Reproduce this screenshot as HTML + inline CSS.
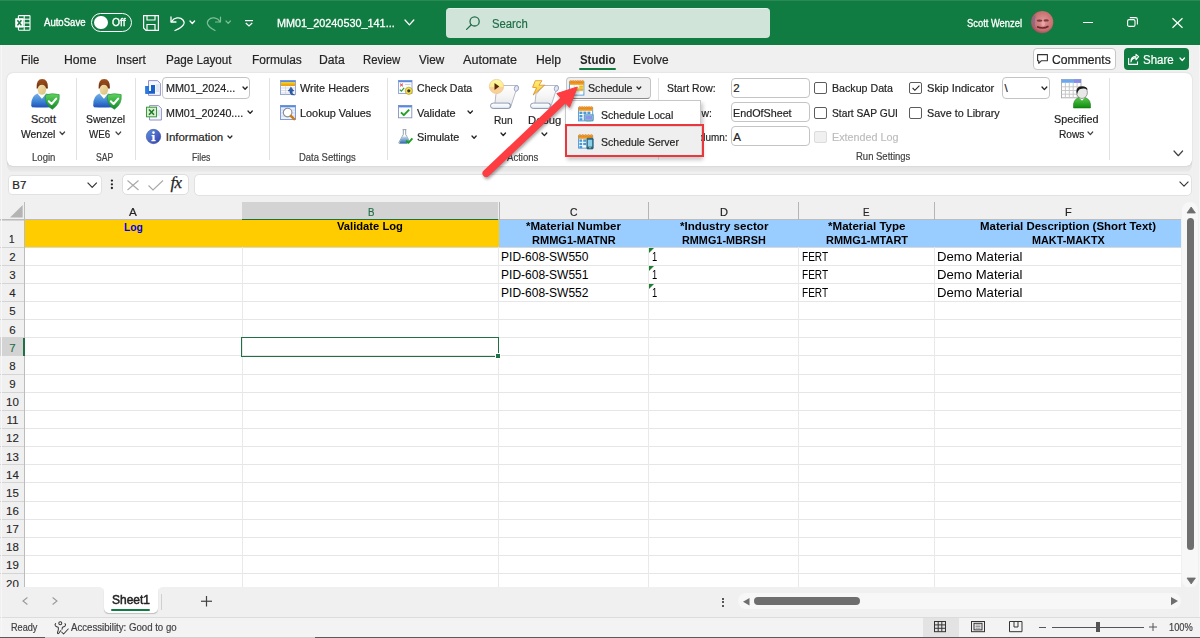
<!DOCTYPE html><html><head><meta charset="utf-8"><style>
html,body{margin:0;padding:0;}
body{width:1200px;height:638px;position:relative;overflow:hidden;background:#f0f0f0;font-family:"Liberation Sans",sans-serif;}
.t{position:absolute;white-space:nowrap;}
svg{display:block}
</style></head><body>
<div style="position:absolute;left:0px;top:0px;width:1200px;height:45px;background:#107c41;"></div>
<div style="position:absolute;left:0px;top:0px;width:1200px;height:1px;background:#2a8a55;"></div>
<svg style="position:absolute;left:15px;top:14.8px;overflow:visible" width="16" height="16" viewBox="0 0 16 16"><g fill="none" stroke="#fff" stroke-width="1.1"><rect x="3.4" y="0.6" width="11.6" height="14.6" rx="0.6"/><line x1="9.2" y1="0.6" x2="9.2" y2="15.2"/><line x1="9.2" y1="4.2" x2="15" y2="4.2"/><line x1="9.2" y1="7.9" x2="15" y2="7.9"/><line x1="9.2" y1="11.6" x2="15" y2="11.6"/><line x1="3.4" y1="4.2" x2="9.2" y2="4.2" /><line x1="3.4" y1="11.6" x2="9.2" y2="11.6"/></g><rect x="0.2" y="3.2" width="8.4" height="9.2" rx="0.6" fill="#fff"/><path d="M2.4 5.2 L6.4 10.4 M6.4 5.2 L2.4 10.4" stroke="#107c41" stroke-width="1.5"/></svg>
<div class="t" style="left:44.30px;top:18.00px;font-size:10px;line-height:10px;color:#fff;transform:scaleX(0.9573);transform-origin:0 0;-webkit-text-stroke:0.35px #fff;">AutoSave</div>
<div style="position:absolute;left:91px;top:13px;width:41px;height:19px;box-sizing:border-box;border:1.2px solid #fff;border-radius:10px;"></div>
<div style="position:absolute;left:94.2px;top:15.7px;width:13.6px;height:13.6px;background:#fff;border-radius:50%;"></div>
<div class="t" style="left:111.80px;top:18.00px;font-size:10px;line-height:10px;color:#fff;transform:scaleX(1.0303);transform-origin:0 0;-webkit-text-stroke:0.35px #fff;">Off</div>
<svg style="position:absolute;left:143px;top:15px;overflow:visible" width="16" height="16" viewBox="0 0 16 16"><g fill="none" stroke="#fff" stroke-width="1.2"><path d="M0.6 0.6 H15.4 V15.4 H3 L0.6 13 Z"/><path d="M4 0.6 V5 H12 V0.6"/><path d="M4 15.4 V9.5 H12 V15.4"/></g></svg>
<svg style="position:absolute;left:170px;top:14.5px;overflow:visible" width="16" height="16" viewBox="0 0 16 16"><g fill="none" stroke="#fff" stroke-width="1.3" stroke-linecap="round" stroke-linejoin="round"><path d="M1 2 V7 H6"/><path d="M1.5 6.6 C4 2.5 10 1.5 13 5 C15.5 8 14 11.5 5 15.5"/></g></svg>
<svg style="position:absolute;left:189.4px;top:20.035000000000004px;overflow:visible" width="6.599999999999994" height="4.529999999999998" viewBox="0 0 6.599999999999994 4.529999999999998"><path d="M1 1 L3.299999999999997 3.529999999999997 L5.599999999999994 1" fill="none" stroke="#fff" stroke-width="1.32" stroke-linecap="round" stroke-linejoin="round"/></svg>
<svg style="position:absolute;left:206px;top:14.5px;overflow:visible" width="16" height="16" viewBox="0 0 16 16"><g fill="none" stroke="#7fbf9a" stroke-width="1.2" stroke-linecap="round" stroke-linejoin="round"><path d="M14.5 2 V7 H9.5"/><path d="M14 6.6 C11.5 2.5 5.5 1.5 2.5 5 C0 8 1.5 11.5 9 15.5"/></g></svg>
<svg style="position:absolute;left:225.20000000000002px;top:20.090000000000007px;overflow:visible" width="6.399999999999977" height="4.4199999999999875" viewBox="0 0 6.399999999999977 4.4199999999999875"><path d="M1 1 L3.1999999999999886 3.4199999999999875 L5.399999999999977 1" fill="none" stroke="#7fbf9a" stroke-width="1.2100000000000002" stroke-linecap="round" stroke-linejoin="round"/></svg>
<svg style="position:absolute;left:245px;top:19.5px;overflow:visible" width="8" height="7" viewBox="0 0 8 7"><g fill="none" stroke="#fff" stroke-width="1.2"><line x1="0" y1="0.6" x2="8" y2="0.6"/><path d="M0.8 3 L4 6 L7.2 3"/></g></svg>
<div class="t" style="left:276.60px;top:18.00px;font-size:11.5px;line-height:11.5px;color:#fff;transform:scaleX(0.9439);transform-origin:0 0;-webkit-text-stroke:0.3px #fff;">MM01_20240530_141...</div>
<svg style="position:absolute;left:404.2px;top:19.279999999999994px;overflow:visible" width="10.800000000000011" height="6.840000000000007" viewBox="0 0 10.800000000000011 6.840000000000007"><path d="M1 1 L5.400000000000006 5.840000000000007 L9.800000000000011 1" fill="none" stroke="#fff" stroke-width="1.32" stroke-linecap="round" stroke-linejoin="round"/></svg>
<div style="position:absolute;left:445.5px;top:7.5px;width:324px;height:30px;box-sizing:border-box;background:#d1e4da;border-radius:4px;border-top:1px solid #e3efe8;"></div>
<svg style="position:absolute;left:465.5px;top:15.5px;overflow:visible" width="14" height="14" viewBox="0 0 14 14"><g fill="none" stroke="#1f6e45" stroke-width="1.3"><circle cx="8.6" cy="5.4" r="4.6"/><line x1="5.3" y1="8.7" x2="0.6" y2="13.4" stroke-linecap="round"/></g></svg>
<div class="t" style="left:492.00px;top:18.00px;font-size:12.5px;line-height:12.5px;color:#1f6e45;transform:scaleX(0.9040);transform-origin:0 0;-webkit-text-stroke:0.2px #1f6e45;">Search</div>
<div class="t" style="left:967.00px;top:19.00px;font-size:10px;line-height:10px;color:#fff;transform:scaleX(0.9362);transform-origin:0 0;-webkit-text-stroke:0.3px #fff;">Scott Wenzel</div>
<svg style="position:absolute;left:1031.3px;top:11.3px;overflow:visible" width="22.3" height="22.3" viewBox="0 0 22.3 22.3"><defs><radialGradient id="av" cx="55%" cy="45%" r="60%"><stop offset="0" stop-color="#e09898"/><stop offset="0.7" stop-color="#c87070"/><stop offset="1" stop-color="#8a4858"/></radialGradient></defs><circle cx="11.15" cy="11.15" r="11.15" fill="url(#av)"/><path d="M1 9 Q2 5 5 4 Q3 10 4.5 17 Q2 15 1 9 Z" fill="#7a6890" opacity="0.7"/><ellipse cx="8.5" cy="9.6" rx="2.8" ry="1.2" fill="#7a3a40"/><ellipse cx="15.2" cy="9.4" rx="2.6" ry="1.2" fill="#7a3a40"/><ellipse cx="12.2" cy="12.8" rx="1.9" ry="2.4" fill="#eaa4a4"/><path d="M6 15.8 Q12 18.5 17.5 15.3" stroke="#6a2a30" stroke-width="1.6" fill="none"/></svg>
<div style="position:absolute;left:1082.6px;top:21.6px;width:10px;height:1.3px;background:#fff;"></div>
<svg style="position:absolute;left:1127px;top:17.4px;overflow:visible" width="11" height="10" viewBox="0 0 11 10"><g fill="none" stroke="#fff" stroke-width="1.1"><rect x="0.6" y="2.6" width="7.4" height="6.8" rx="1.5"/><path d="M2.8 0.6 H8.5 Q10.4 0.6 10.4 2.5 V7.5"/></g></svg>
<svg style="position:absolute;left:1172px;top:17.6px;overflow:visible" width="11" height="10" viewBox="0 0 11 10"><g stroke="#fff" stroke-width="1.2"><line x1="0.5" y1="0.3" x2="10.5" y2="9.7"/><line x1="10.5" y1="0.3" x2="0.5" y2="9.7"/></g></svg>
<div class="t" style="left:20.50px;top:54.00px;font-size:12.3px;line-height:12.3px;color:#242424;transform:scaleX(0.9192);transform-origin:0 0;-webkit-text-stroke:0.2px #242424;">File</div>
<div class="t" style="left:63.50px;top:54.00px;font-size:12.3px;line-height:12.3px;color:#242424;transform:scaleX(0.9909);transform-origin:0 0;-webkit-text-stroke:0.2px #242424;">Home</div>
<div class="t" style="left:115.50px;top:54.00px;font-size:12.3px;line-height:12.3px;color:#242424;transform:scaleX(0.9691);transform-origin:0 0;-webkit-text-stroke:0.2px #242424;">Insert</div>
<div class="t" style="left:165.90px;top:54.00px;font-size:12.3px;line-height:12.3px;color:#242424;transform:scaleX(0.9500);transform-origin:0 0;-webkit-text-stroke:0.2px #242424;">Page Layout</div>
<div class="t" style="left:251.50px;top:54.00px;font-size:12.3px;line-height:12.3px;color:#242424;transform:scaleX(0.9717);transform-origin:0 0;-webkit-text-stroke:0.2px #242424;">Formulas</div>
<div class="t" style="left:319.30px;top:54.00px;font-size:12.3px;line-height:12.3px;color:#242424;transform:scaleX(0.9885);transform-origin:0 0;-webkit-text-stroke:0.2px #242424;">Data</div>
<div class="t" style="left:362.70px;top:54.00px;font-size:12.3px;line-height:12.3px;color:#242424;transform:scaleX(0.9233);transform-origin:0 0;-webkit-text-stroke:0.2px #242424;">Review</div>
<div class="t" style="left:419.00px;top:54.00px;font-size:12.3px;line-height:12.3px;color:#242424;transform:scaleX(0.9547);transform-origin:0 0;-webkit-text-stroke:0.2px #242424;">View</div>
<div class="t" style="left:463.30px;top:54.00px;font-size:12.3px;line-height:12.3px;color:#242424;transform:scaleX(1.0256);transform-origin:0 0;-webkit-text-stroke:0.2px #242424;">Automate</div>
<div class="t" style="left:536.00px;top:54.00px;font-size:12.3px;line-height:12.3px;color:#242424;transform:scaleX(0.9881);transform-origin:0 0;-webkit-text-stroke:0.2px #242424;">Help</div>
<div class="t" style="left:632.70px;top:54.00px;font-size:12.3px;line-height:12.3px;color:#242424;transform:scaleX(0.9648);transform-origin:0 0;-webkit-text-stroke:0.2px #242424;">Evolve</div>
<div class="t" style="left:579.75px;top:54.00px;font-size:12.3px;line-height:12.3px;color:#242424;font-weight:bold;transform:scaleX(0.9281);transform-origin:0 0;">Studio</div>
<div style="position:absolute;left:579.3px;top:68px;width:36.8px;height:2px;background:#107c41;border-radius:1px;"></div>
<div style="position:absolute;left:1032.7px;top:47.5px;width:83.3px;height:22.2px;box-sizing:border-box;background:#fff;border:1px solid #c7c7c7;border-radius:4px;"></div>
<svg style="position:absolute;left:1037px;top:54px;overflow:visible" width="11" height="10" viewBox="0 0 11 10"><path d="M0.6 0.6 H10.4 V6.8 H4.2 L1.8 9.3 V6.8 H0.6 Z" fill="none" stroke="#333" stroke-width="1.1" stroke-linejoin="round"/></svg>
<div class="t" style="left:1052.00px;top:54.00px;font-size:12.3px;line-height:12.3px;color:#242424;transform:scaleX(0.9874);transform-origin:0 0;-webkit-text-stroke:0.2px #242424;">Comments</div>
<div style="position:absolute;left:1124px;top:47.5px;width:64.7px;height:22.5px;background:#107c41;border-radius:4px;"></div>
<svg style="position:absolute;left:1127.6px;top:53.5px;overflow:visible" width="11" height="11" viewBox="0 0 11 11"><g fill="none" stroke="#fff" stroke-width="1.1" stroke-linejoin="round"><path d="M0.6 4 V10.4 H9.5 V7.5"/><path d="M3 8 Q3.5 4 8 3.6 V5.8 L10.6 2.6 L8 0.4 V2.2 Q2.5 2.6 3 8 Z"/></g></svg>
<div class="t" style="left:1143.00px;top:54.00px;font-size:12.3px;line-height:12.3px;color:#fff;transform:scaleX(0.9360);transform-origin:0 0;-webkit-text-stroke:0.2px #fff;">Share</div>
<svg style="position:absolute;left:1179.1000000000001px;top:57.36250000000006px;overflow:visible" width="6.499999999999773" height="4.474999999999875" viewBox="0 0 6.499999999999773 4.474999999999875"><path d="M1 1 L3.2499999999998863 3.4749999999998753 L5.499999999999773 1" fill="none" stroke="#fff" stroke-width="1.32" stroke-linecap="round" stroke-linejoin="round"/></svg>
<div style="position:absolute;left:7px;top:160px;width:1185.3px;height:13px;background:linear-gradient(#d6d6d6,#e2e2e2 40%,#e9e9e9 85%,#f4f4f4);border-radius:0 0 8px 8px;"></div>
<div style="position:absolute;left:7px;top:73px;width:1185.3px;height:93px;background:#fff;border-radius:6px;box-shadow:0 0 1.5px rgba(0,0,0,0.2);"></div>
<div style="position:absolute;left:76px;top:77.8px;width:1px;height:82.5px;background:#e1e1e1;"></div>
<div style="position:absolute;left:134.7px;top:77.8px;width:1px;height:82.5px;background:#e1e1e1;"></div>
<div style="position:absolute;left:268.8px;top:77.8px;width:1px;height:82.5px;background:#e1e1e1;"></div>
<div style="position:absolute;left:386.7px;top:77.8px;width:1px;height:82.5px;background:#e1e1e1;"></div>
<div style="position:absolute;left:658.4px;top:77.8px;width:1px;height:82.5px;background:#e1e1e1;"></div>
<div style="position:absolute;left:1108.5px;top:77.8px;width:1px;height:82.5px;background:#e1e1e1;"></div>
<div class="t" style="left:31.80px;top:152.00px;font-size:10.5px;line-height:10.5px;color:#424242;transform:scaleX(0.9105);transform-origin:0 0;-webkit-text-stroke:0.2px #424242;">Login</div>
<div class="t" style="left:96.40px;top:152.00px;font-size:10.5px;line-height:10.5px;color:#424242;transform:scaleX(0.8190);transform-origin:0 0;-webkit-text-stroke:0.2px #424242;">SAP</div>
<div class="t" style="left:192.40px;top:152.00px;font-size:10.5px;line-height:10.5px;color:#424242;transform:scaleX(0.8262);transform-origin:0 0;-webkit-text-stroke:0.2px #424242;">Files</div>
<div class="t" style="left:299.20px;top:152.00px;font-size:10.5px;line-height:10.5px;color:#424242;transform:scaleX(0.9009);transform-origin:0 0;-webkit-text-stroke:0.2px #424242;">Data Settings</div>
<div class="t" style="left:506.60px;top:152.00px;font-size:10.5px;line-height:10.5px;color:#424242;transform:scaleX(0.9115);transform-origin:0 0;-webkit-text-stroke:0.2px #424242;">Actions</div>
<div class="t" style="left:855.80px;top:151.00px;font-size:10.5px;line-height:10.5px;color:#424242;transform:scaleX(0.9035);transform-origin:0 0;-webkit-text-stroke:0.2px #424242;">Run Settings</div>
<div class="t" style="left:30.90px;top:114.00px;font-size:11px;line-height:11px;color:#242424;-webkit-text-stroke:0.2px #242424;">Scott</div>
<div class="t" style="left:21.20px;top:129.00px;font-size:11px;line-height:11px;color:#242424;transform:scaleX(0.9425);transform-origin:0 0;-webkit-text-stroke:0.2px #242424;">Wenzel</div>
<svg style="position:absolute;left:59.0px;top:131.03500000000003px;overflow:visible" width="6.599999999999994" height="4.529999999999998" viewBox="0 0 6.599999999999994 4.529999999999998"><path d="M1 1 L3.299999999999997 3.529999999999997 L5.599999999999994 1" fill="none" stroke="#424242" stroke-width="1.2100000000000002" stroke-linecap="round" stroke-linejoin="round"/></svg>
<div class="t" style="left:85.90px;top:114.00px;font-size:11px;line-height:11px;color:#242424;transform:scaleX(0.9399);transform-origin:0 0;-webkit-text-stroke:0.2px #242424;">Swenzel</div>
<div class="t" style="left:89.30px;top:129.00px;font-size:11px;line-height:11px;color:#242424;transform:scaleX(0.8889);transform-origin:0 0;-webkit-text-stroke:0.2px #242424;">WE6</div>
<svg style="position:absolute;left:114.60000000000001px;top:131.00750000000002px;overflow:visible" width="6.699999999999989" height="4.584999999999994" viewBox="0 0 6.699999999999989 4.584999999999994"><path d="M1 1 L3.3499999999999943 3.5849999999999937 L5.699999999999989 1" fill="none" stroke="#424242" stroke-width="1.2100000000000002" stroke-linecap="round" stroke-linejoin="round"/></svg>
<div style="position:absolute;left:162.4px;top:76.7px;width:88px;height:22.6px;box-sizing:border-box;border:1px solid #c4c4c4;border-radius:4px;background:#fff;"></div>
<div class="t" style="left:165.70px;top:83.00px;font-size:11.5px;line-height:11.5px;color:#242424;transform:scaleX(0.9429);transform-origin:0 0;-webkit-text-stroke:0.2px #242424;">MM01_2024...</div>
<svg style="position:absolute;left:241.9px;top:85.645px;overflow:visible" width="6.199999999999989" height="4.309999999999993" viewBox="0 0 6.199999999999989 4.309999999999993"><path d="M1 1 L3.0999999999999943 3.309999999999994 L5.199999999999989 1" fill="none" stroke="#242424" stroke-width="1.32" stroke-linecap="round" stroke-linejoin="round"/></svg>
<div class="t" style="left:165.70px;top:108.00px;font-size:11.5px;line-height:11.5px;color:#242424;transform:scaleX(0.9290);transform-origin:0 0;-webkit-text-stroke:0.2px #242424;">MM01_20240....</div>
<svg style="position:absolute;left:246.6px;top:110.3175px;overflow:visible" width="6.300000000000011" height="4.365000000000006" viewBox="0 0 6.300000000000011 4.365000000000006"><path d="M1 1 L3.1500000000000057 3.3650000000000064 L5.300000000000011 1" fill="none" stroke="#242424" stroke-width="1.32" stroke-linecap="round" stroke-linejoin="round"/></svg>
<div class="t" style="left:165.70px;top:132.00px;font-size:11.5px;line-height:11.5px;color:#242424;-webkit-text-stroke:0.2px #242424;">Information</div>
<svg style="position:absolute;left:227.4px;top:134.72750000000002px;overflow:visible" width="5.899999999999977" height="4.144999999999987" viewBox="0 0 5.899999999999977 4.144999999999987"><path d="M1 1 L2.9499999999999886 3.1449999999999876 L4.899999999999977 1" fill="none" stroke="#242424" stroke-width="1.32" stroke-linecap="round" stroke-linejoin="round"/></svg>
<div class="t" style="left:299.50px;top:83.00px;font-size:11.5px;line-height:11.5px;color:#242424;transform:scaleX(0.9454);transform-origin:0 0;-webkit-text-stroke:0.2px #242424;">Write Headers</div>
<div class="t" style="left:299.50px;top:108.00px;font-size:11.5px;line-height:11.5px;color:#242424;transform:scaleX(0.9475);transform-origin:0 0;-webkit-text-stroke:0.2px #242424;">Lookup Values</div>
<div class="t" style="left:416.80px;top:83.00px;font-size:11.5px;line-height:11.5px;color:#242424;transform:scaleX(0.9185);transform-origin:0 0;-webkit-text-stroke:0.2px #242424;">Check Data</div>
<div class="t" style="left:416.80px;top:108.00px;font-size:11.5px;line-height:11.5px;color:#242424;transform:scaleX(0.9509);transform-origin:0 0;-webkit-text-stroke:0.2px #242424;">Validate</div>
<svg style="position:absolute;left:467.0px;top:110.08999999999999px;overflow:visible" width="6.400000000000034" height="4.4200000000000195" viewBox="0 0 6.400000000000034 4.4200000000000195"><path d="M1 1 L3.200000000000017 3.420000000000019 L5.400000000000034 1" fill="none" stroke="#242424" stroke-width="1.32" stroke-linecap="round" stroke-linejoin="round"/></svg>
<div class="t" style="left:416.80px;top:132.00px;font-size:11.5px;line-height:11.5px;color:#242424;transform:scaleX(0.9430);transform-origin:0 0;-webkit-text-stroke:0.2px #242424;">Simulate</div>
<svg style="position:absolute;left:470.59999999999997px;top:134.845px;overflow:visible" width="6.2000000000000455" height="4.310000000000025" viewBox="0 0 6.2000000000000455 4.310000000000025"><path d="M1 1 L3.1000000000000227 3.3100000000000254 L5.2000000000000455 1" fill="none" stroke="#242424" stroke-width="1.32" stroke-linecap="round" stroke-linejoin="round"/></svg>
<div class="t" style="left:494.00px;top:115.00px;font-size:11.5px;line-height:11.5px;color:#242424;transform:scaleX(0.8863);transform-origin:0 0;-webkit-text-stroke:0.2px #242424;">Run</div>
<svg style="position:absolute;left:500.09999999999997px;top:132.0625px;overflow:visible" width="6.500000000000057" height="4.475000000000032" viewBox="0 0 6.500000000000057 4.475000000000032"><path d="M1 1 L3.2500000000000284 3.4750000000000316 L5.500000000000057 1" fill="none" stroke="#242424" stroke-width="1.32" stroke-linecap="round" stroke-linejoin="round"/></svg>
<div class="t" style="left:527.80px;top:115.00px;font-size:11.5px;line-height:11.5px;color:#242424;transform:scaleX(0.9794);transform-origin:0 0;-webkit-text-stroke:0.2px #242424;">Debug</div>
<svg style="position:absolute;left:540.8px;top:131.98px;overflow:visible" width="6.800000000000068" height="4.640000000000038" viewBox="0 0 6.800000000000068 4.640000000000038"><path d="M1 1 L3.400000000000034 3.640000000000038 L5.800000000000068 1" fill="none" stroke="#242424" stroke-width="1.32" stroke-linecap="round" stroke-linejoin="round"/></svg>
<div class="t" style="left:666.50px;top:83.00px;font-size:11.5px;line-height:11.5px;color:#242424;transform:scaleX(0.9069);transform-origin:0 0;-webkit-text-stroke:0.2px #242424;">Start Row:</div>
<div class="t" style="left:666.50px;top:108.00px;font-size:11.5px;line-height:11.5px;color:#242424;transform:scaleX(0.9007);transform-origin:0 0;-webkit-text-stroke:0.2px #242424;">End Row:</div>
<div class="t" style="left:666.50px;top:132.00px;font-size:11.5px;line-height:11.5px;color:#242424;transform:scaleX(0.8606);transform-origin:0 0;-webkit-text-stroke:0.2px #242424;">Start Column:</div>
<div style="position:absolute;left:731.2px;top:77.6px;width:78.6px;height:20.5px;box-sizing:border-box;border:1px solid #c4c4c4;border-radius:4px;background:#fff;"></div>
<div style="position:absolute;left:731.2px;top:102px;width:78.6px;height:20.099999999999994px;box-sizing:border-box;border:1px solid #c4c4c4;border-radius:4px;background:#fff;"></div>
<div style="position:absolute;left:731.2px;top:126.3px;width:78.6px;height:20.10000000000001px;box-sizing:border-box;border:1px solid #c4c4c4;border-radius:4px;background:#fff;"></div>
<div class="t" style="left:733.30px;top:83.00px;font-size:11.5px;line-height:11.5px;color:#242424;-webkit-text-stroke:0.2px #242424;">2</div>
<div class="t" style="left:733.30px;top:108.00px;font-size:11.5px;line-height:11.5px;color:#242424;transform:scaleX(0.9354);transform-origin:0 0;-webkit-text-stroke:0.2px #242424;">EndOfSheet</div>
<div class="t" style="left:733.30px;top:132.00px;font-size:11.5px;line-height:11.5px;color:#242424;-webkit-text-stroke:0.2px #242424;">A</div>
<div style="position:absolute;left:814.2px;top:82.2px;width:12.5px;height:12px;box-sizing:border-box;border:1px solid #5c5c5c;border-radius:2px;background:#fff;"></div>
<div class="t" style="left:832.20px;top:83.00px;font-size:11.5px;line-height:11.5px;color:#242424;transform:scaleX(0.9263);transform-origin:0 0;-webkit-text-stroke:0.2px #242424;">Backup Data</div>
<div style="position:absolute;left:814.2px;top:106.6px;width:12.5px;height:12px;box-sizing:border-box;border:1px solid #5c5c5c;border-radius:2px;background:#fff;"></div>
<div class="t" style="left:832.20px;top:108.00px;font-size:11.5px;line-height:11.5px;color:#242424;transform:scaleX(0.8911);transform-origin:0 0;-webkit-text-stroke:0.2px #242424;">Start SAP GUI</div>
<div style="position:absolute;left:814.2px;top:131px;width:12.5px;height:12px;box-sizing:border-box;border:1px solid #dcdcdc;border-radius:2px;background:#f0f0f0;"></div>
<div class="t" style="left:832.20px;top:132.00px;font-size:11.5px;line-height:11.5px;color:#bdbdbd;transform:scaleX(0.9380);transform-origin:0 0;-webkit-text-stroke:0.2px #bdbdbd;">Extended Log</div>
<div style="position:absolute;left:909px;top:82.2px;width:12.5px;height:12px;box-sizing:border-box;border:1px solid #5c5c5c;border-radius:2px;background:#fff;"></div>
<svg style="position:absolute;left:911.5px;top:85.2px;overflow:visible" width="8" height="6" viewBox="0 0 8 6"><path d="M0.6 3 L2.9 5.3 L7.4 0.6" fill="none" stroke="#242424" stroke-width="1.1"/></svg>
<div class="t" style="left:926.50px;top:83.00px;font-size:11.5px;line-height:11.5px;color:#242424;transform:scaleX(0.9656);transform-origin:0 0;-webkit-text-stroke:0.2px #242424;">Skip Indicator</div>
<div style="position:absolute;left:909px;top:106.6px;width:12.5px;height:12px;box-sizing:border-box;border:1px solid #5c5c5c;border-radius:2px;background:#fff;"></div>
<div class="t" style="left:926.50px;top:108.00px;font-size:11.5px;line-height:11.5px;color:#242424;transform:scaleX(0.9399);transform-origin:0 0;-webkit-text-stroke:0.2px #242424;">Save to Library</div>
<div style="position:absolute;left:1002.3px;top:77.4px;width:47.3px;height:21.4px;box-sizing:border-box;border:1px solid #c4c4c4;border-radius:4px;background:#fff;"></div>
<div class="t" style="left:1004.40px;top:83.00px;font-size:11.5px;line-height:11.5px;color:#242424;-webkit-text-stroke:0.2px #242424;">\</div>
<svg style="position:absolute;left:1041.2px;top:85.68px;overflow:visible" width="6.7999999999999545" height="4.639999999999976" viewBox="0 0 6.7999999999999545 4.639999999999976"><path d="M1 1 L3.3999999999999773 3.6399999999999753 L5.7999999999999545 1" fill="none" stroke="#242424" stroke-width="1.32" stroke-linecap="round" stroke-linejoin="round"/></svg>
<div class="t" style="left:1053.80px;top:114.00px;font-size:11px;line-height:11px;color:#242424;transform:scaleX(0.9834);transform-origin:0 0;-webkit-text-stroke:0.2px #242424;">Specified</div>
<div class="t" style="left:1058.50px;top:129.00px;font-size:11px;line-height:11px;color:#242424;transform:scaleX(0.9236);transform-origin:0 0;-webkit-text-stroke:0.2px #242424;">Rows</div>
<svg style="position:absolute;left:1087.2px;top:131.20750000000004px;overflow:visible" width="6.699999999999818" height="4.5849999999999" viewBox="0 0 6.699999999999818 4.5849999999999"><path d="M1 1 L3.349999999999909 3.5849999999999 L5.699999999999818 1" fill="none" stroke="#424242" stroke-width="1.2100000000000002" stroke-linecap="round" stroke-linejoin="round"/></svg>
<svg style="position:absolute;left:1173.4px;top:149.93500000000003px;overflow:visible" width="10.599999999999909" height="6.729999999999951" viewBox="0 0 10.599999999999909 6.729999999999951"><path d="M1 1 L5.2999999999999545 5.729999999999951 L9.599999999999909 1" fill="none" stroke="#424242" stroke-width="1.2100000000000002" stroke-linecap="round" stroke-linejoin="round"/></svg>
<div style="position:absolute;left:565.9px;top:77.4px;width:84.8px;height:21.4px;box-sizing:border-box;border:1px solid #c4c4c4;border-bottom-color:#8a8a8a;border-radius:4px;background:#efefef;"></div>
<div class="t" style="left:588.20px;top:83.00px;font-size:11.5px;line-height:11.5px;color:#242424;transform:scaleX(0.9281);transform-origin:0 0;-webkit-text-stroke:0.2px #242424;">Schedule</div>
<svg style="position:absolute;left:636.3px;top:85.95499999999998px;overflow:visible" width="5.800000000000068" height="4.090000000000037" viewBox="0 0 5.800000000000068 4.090000000000037"><path d="M1 1 L2.900000000000034 3.0900000000000376 L4.800000000000068 1" fill="none" stroke="#242424" stroke-width="1.32" stroke-linecap="round" stroke-linejoin="round"/></svg>
<div style="position:absolute;left:7.9px;top:174.9px;width:94.1px;height:20.5px;box-sizing:border-box;border:1px solid #e1e1e1;border-radius:4px;background:#fff;"></div>
<div class="t" style="left:12.30px;top:180.00px;font-size:11.5px;line-height:11.5px;color:#242424;-webkit-text-stroke:0.2px #242424;">B7</div>
<svg style="position:absolute;left:87px;top:182px;overflow:visible" width="10.5" height="6.5" viewBox="0 0 10.5 6.5"><path d="M0.6 0.6 L5.2 5.4 L9.8 0.6" fill="none" stroke="#333" stroke-width="1.2" stroke-linejoin="round"/></svg>
<svg style="position:absolute;left:109px;top:178px;overflow:visible" width="6" height="13" viewBox="0 0 6 13"><g fill="#242424"><circle cx="2.9" cy="2.6" r="1.15"/><circle cx="2.9" cy="6.3" r="1.15"/><circle cx="2.9" cy="10" r="1.15"/></g></svg>
<div style="position:absolute;left:122px;top:173.6px;width:67.4px;height:21.8px;box-sizing:border-box;border:1px solid #dedede;border-radius:5px;background:#fff;"></div>
<svg style="position:absolute;left:127.4px;top:179.8px;overflow:visible" width="12" height="10.5" viewBox="0 0 12 10.5"><g stroke="#a8a8a8" stroke-width="1.1"><line x1="0.5" y1="0.5" x2="11.5" y2="10"/><line x1="11.5" y1="0.5" x2="0.5" y2="10"/></g></svg>
<svg style="position:absolute;left:147.9px;top:180px;overflow:visible" width="15.5" height="10.5" viewBox="0 0 15.5 10.5"><path d="M0.5 5.5 L5 10 L15 0.5" fill="none" stroke="#a8a8a8" stroke-width="1.1"/></svg>
<div class="t" style="left:170.5px;top:174px;font:italic 17px/17px 'Liberation Serif',serif;color:#242424;letter-spacing:-0.6px;-webkit-text-stroke:0.25px #242424;">fx</div>
<div style="position:absolute;left:194px;top:173.5px;width:998px;height:22.1px;box-sizing:border-box;border:1px solid #e1e1e1;border-radius:5px;background:#fff;"></div>
<svg style="position:absolute;left:1178.5px;top:180.6px;overflow:visible" width="10" height="6" viewBox="0 0 10 6"><path d="M0.6 0.6 L5 5.2 L9.4 0.6" fill="none" stroke="#333" stroke-width="1.1" stroke-linejoin="round"/></svg>
<div style="position:absolute;left:25px;top:220px;width:1155.6px;height:367px;background:#fff;"></div>
<div style="position:absolute;left:0px;top:202px;width:24.5px;height:385px;background:#f0f0f0;"></div>
<div style="position:absolute;left:24px;top:202px;width:1px;height:385px;background:#bcbcbc;"></div>
<div style="position:absolute;left:0px;top:219px;width:1180.6px;height:1px;background:#bcbcbc;"></div>
<svg style="position:absolute;left:9.9px;top:204.9px;overflow:visible" width="12.7" height="12.5" viewBox="0 0 12.7 12.5"><path d="M12.7 0 V12.5 H0 Z" fill="#b4b4b4"/></svg>
<div style="position:absolute;left:242.3px;top:202px;width:256.2px;height:17px;background:#d3d3d3;"></div>
<div style="position:absolute;left:242.3px;top:218.5px;width:256.2px;height:1.6px;background:#1e7145;"></div>
<div style="position:absolute;left:498.5px;top:202px;width:1px;height:17.5px;background:#b5b5b5;"></div>
<div style="position:absolute;left:648.4px;top:202px;width:1px;height:17.5px;background:#b5b5b5;"></div>
<div style="position:absolute;left:798.4px;top:202px;width:1px;height:17.5px;background:#b5b5b5;"></div>
<div style="position:absolute;left:934.4px;top:202px;width:1px;height:17.5px;background:#b5b5b5;"></div>
<div class="t" style="left:129.40px;top:207.00px;font-size:11.5px;line-height:11.5px;color:#242424;transform:scaleX(1.0196);transform-origin:0 0;-webkit-text-stroke:0.2px #242424;">A</div>
<div class="t" style="left:367.75px;top:207.00px;font-size:11.5px;line-height:11.5px;color:#1e6e4a;transform:scaleX(0.8431);transform-origin:0 0;-webkit-text-stroke:0.2px #1e6e4a;">B</div>
<div class="t" style="left:570.00px;top:207.00px;font-size:11.5px;line-height:11.5px;color:#242424;transform:scaleX(0.9036);transform-origin:0 0;-webkit-text-stroke:0.2px #242424;">C</div>
<div class="t" style="left:719.50px;top:207.00px;font-size:11.5px;line-height:11.5px;color:#242424;transform:scaleX(0.9639);transform-origin:0 0;-webkit-text-stroke:0.2px #242424;">D</div>
<div class="t" style="left:863.00px;top:207.00px;font-size:11.5px;line-height:11.5px;color:#242424;transform:scaleX(0.8497);transform-origin:0 0;-webkit-text-stroke:0.2px #242424;">E</div>
<div class="t" style="left:1065.00px;top:207.00px;font-size:11.5px;line-height:11.5px;color:#242424;transform:scaleX(0.9504);transform-origin:0 0;-webkit-text-stroke:0.2px #242424;">F</div>
<div style="position:absolute;left:25px;top:220px;width:473.5px;height:27px;background:#ffcc00;"></div>
<div style="position:absolute;left:498.5px;top:220px;width:682.1px;height:27px;background:#99ccff;"></div>
<div style="position:absolute;left:25px;top:246.5px;width:1155.6px;height:1px;background:#e6e6e6;"></div>
<div style="position:absolute;left:0px;top:246.5px;width:24px;height:1px;background:#d4d4d4;"></div>
<div style="position:absolute;left:25px;top:264.65px;width:1155.6px;height:1px;background:#e6e6e6;"></div>
<div style="position:absolute;left:0px;top:264.65px;width:24px;height:1px;background:#d4d4d4;"></div>
<div style="position:absolute;left:25px;top:282.8px;width:1155.6px;height:1px;background:#e6e6e6;"></div>
<div style="position:absolute;left:0px;top:282.8px;width:24px;height:1px;background:#d4d4d4;"></div>
<div style="position:absolute;left:25px;top:300.95px;width:1155.6px;height:1px;background:#e6e6e6;"></div>
<div style="position:absolute;left:0px;top:300.95px;width:24px;height:1px;background:#d4d4d4;"></div>
<div style="position:absolute;left:25px;top:319.1px;width:1155.6px;height:1px;background:#e6e6e6;"></div>
<div style="position:absolute;left:0px;top:319.1px;width:24px;height:1px;background:#d4d4d4;"></div>
<div style="position:absolute;left:25px;top:337.25px;width:1155.6px;height:1px;background:#e6e6e6;"></div>
<div style="position:absolute;left:0px;top:337.25px;width:24px;height:1px;background:#d4d4d4;"></div>
<div style="position:absolute;left:25px;top:355.4px;width:1155.6px;height:1px;background:#e6e6e6;"></div>
<div style="position:absolute;left:0px;top:355.4px;width:24px;height:1px;background:#d4d4d4;"></div>
<div style="position:absolute;left:25px;top:373.55px;width:1155.6px;height:1px;background:#e6e6e6;"></div>
<div style="position:absolute;left:0px;top:373.55px;width:24px;height:1px;background:#d4d4d4;"></div>
<div style="position:absolute;left:25px;top:391.7px;width:1155.6px;height:1px;background:#e6e6e6;"></div>
<div style="position:absolute;left:0px;top:391.7px;width:24px;height:1px;background:#d4d4d4;"></div>
<div style="position:absolute;left:25px;top:409.85px;width:1155.6px;height:1px;background:#e6e6e6;"></div>
<div style="position:absolute;left:0px;top:409.85px;width:24px;height:1px;background:#d4d4d4;"></div>
<div style="position:absolute;left:25px;top:428.0px;width:1155.6px;height:1px;background:#e6e6e6;"></div>
<div style="position:absolute;left:0px;top:428.0px;width:24px;height:1px;background:#d4d4d4;"></div>
<div style="position:absolute;left:25px;top:446.15px;width:1155.6px;height:1px;background:#e6e6e6;"></div>
<div style="position:absolute;left:0px;top:446.15px;width:24px;height:1px;background:#d4d4d4;"></div>
<div style="position:absolute;left:25px;top:464.3px;width:1155.6px;height:1px;background:#e6e6e6;"></div>
<div style="position:absolute;left:0px;top:464.3px;width:24px;height:1px;background:#d4d4d4;"></div>
<div style="position:absolute;left:25px;top:482.45px;width:1155.6px;height:1px;background:#e6e6e6;"></div>
<div style="position:absolute;left:0px;top:482.45px;width:24px;height:1px;background:#d4d4d4;"></div>
<div style="position:absolute;left:25px;top:500.6px;width:1155.6px;height:1px;background:#e6e6e6;"></div>
<div style="position:absolute;left:0px;top:500.6px;width:24px;height:1px;background:#d4d4d4;"></div>
<div style="position:absolute;left:25px;top:518.75px;width:1155.6px;height:1px;background:#e6e6e6;"></div>
<div style="position:absolute;left:0px;top:518.75px;width:24px;height:1px;background:#d4d4d4;"></div>
<div style="position:absolute;left:25px;top:536.9px;width:1155.6px;height:1px;background:#e6e6e6;"></div>
<div style="position:absolute;left:0px;top:536.9px;width:24px;height:1px;background:#d4d4d4;"></div>
<div style="position:absolute;left:25px;top:555.05px;width:1155.6px;height:1px;background:#e6e6e6;"></div>
<div style="position:absolute;left:0px;top:555.05px;width:24px;height:1px;background:#d4d4d4;"></div>
<div style="position:absolute;left:25px;top:573.2px;width:1155.6px;height:1px;background:#e6e6e6;"></div>
<div style="position:absolute;left:0px;top:573.2px;width:24px;height:1px;background:#d4d4d4;"></div>
<div style="position:absolute;left:25px;top:246.5px;width:1155.6px;height:1px;background:#d9d9d9;"></div>
<div style="position:absolute;left:241.8px;top:247px;width:1px;height:340px;background:#e9e9e9;"></div>
<div style="position:absolute;left:498.0px;top:247px;width:1px;height:340px;background:#e9e9e9;"></div>
<div style="position:absolute;left:647.9px;top:247px;width:1px;height:340px;background:#e9e9e9;"></div>
<div style="position:absolute;left:797.9px;top:247px;width:1px;height:340px;background:#e9e9e9;"></div>
<div style="position:absolute;left:933.9px;top:247px;width:1px;height:340px;background:#e9e9e9;"></div>
<div style="position:absolute;left:0px;top:219.5px;width:24px;height:1px;background:#d4d4d4;"></div>
<div class="t" style="left:9.40px;top:234.00px;font-size:11.5px;line-height:11.5px;color:#242424;transform:scaleX(0.8750);transform-origin:0 0;-webkit-text-stroke:0.2px #242424;">1</div>
<div class="t" style="left:9.20px;top:252.00px;font-size:11.5px;line-height:11.5px;color:#242424;-webkit-text-stroke:0.1px #242424;">2</div>
<div class="t" style="left:9.20px;top:270.00px;font-size:11.5px;line-height:11.5px;color:#242424;-webkit-text-stroke:0.1px #242424;">3</div>
<div class="t" style="left:9.20px;top:288.00px;font-size:11.5px;line-height:11.5px;color:#242424;-webkit-text-stroke:0.1px #242424;">4</div>
<div class="t" style="left:9.20px;top:306.00px;font-size:11.5px;line-height:11.5px;color:#242424;-webkit-text-stroke:0.1px #242424;">5</div>
<div class="t" style="left:9.20px;top:325.00px;font-size:11.5px;line-height:11.5px;color:#242424;-webkit-text-stroke:0.1px #242424;">6</div>
<div class="t" style="left:9.20px;top:343.00px;font-size:11.5px;line-height:11.5px;color:#1e6e4a;-webkit-text-stroke:0.1px #1e6e4a;">7</div>
<div class="t" style="left:9.20px;top:361.00px;font-size:11.5px;line-height:11.5px;color:#242424;-webkit-text-stroke:0.1px #242424;">8</div>
<div class="t" style="left:9.20px;top:379.00px;font-size:11.5px;line-height:11.5px;color:#242424;-webkit-text-stroke:0.1px #242424;">9</div>
<div class="t" style="left:6.00px;top:397.00px;font-size:11.5px;line-height:11.5px;color:#242424;-webkit-text-stroke:0.1px #242424;">10</div>
<div class="t" style="left:6.43px;top:415.00px;font-size:11.5px;line-height:11.5px;color:#242424;-webkit-text-stroke:0.1px #242424;">11</div>
<div class="t" style="left:6.00px;top:433.00px;font-size:11.5px;line-height:11.5px;color:#242424;-webkit-text-stroke:0.1px #242424;">12</div>
<div class="t" style="left:6.00px;top:452.00px;font-size:11.5px;line-height:11.5px;color:#242424;-webkit-text-stroke:0.1px #242424;">13</div>
<div class="t" style="left:6.00px;top:470.00px;font-size:11.5px;line-height:11.5px;color:#242424;-webkit-text-stroke:0.1px #242424;">14</div>
<div class="t" style="left:6.00px;top:488.00px;font-size:11.5px;line-height:11.5px;color:#242424;-webkit-text-stroke:0.1px #242424;">15</div>
<div class="t" style="left:6.00px;top:506.00px;font-size:11.5px;line-height:11.5px;color:#242424;-webkit-text-stroke:0.1px #242424;">16</div>
<div class="t" style="left:6.00px;top:524.00px;font-size:11.5px;line-height:11.5px;color:#242424;-webkit-text-stroke:0.1px #242424;">17</div>
<div class="t" style="left:6.00px;top:542.00px;font-size:11.5px;line-height:11.5px;color:#242424;-webkit-text-stroke:0.1px #242424;">18</div>
<div class="t" style="left:6.00px;top:560.00px;font-size:11.5px;line-height:11.5px;color:#242424;-webkit-text-stroke:0.1px #242424;">19</div>
<div class="t" style="left:6.00px;top:579.00px;font-size:11.5px;line-height:11.5px;color:#242424;-webkit-text-stroke:0.1px #242424;">20</div>
<div style="position:absolute;left:0px;top:338.25px;width:24px;height:17.15px;background:#d3d3d3;"></div>
<div style="position:absolute;left:23px;top:337.75px;width:1.6px;height:18.15px;background:#1e7145;"></div>
<div class="t" style="left:9.20px;top:343.00px;font-size:11.5px;line-height:11.5px;color:#1e6e4a;-webkit-text-stroke:0.1px #1e6e4a;">7</div>
<div class="t" style="left:123.90px;top:223.00px;font-size:10.3px;line-height:10.3px;color:#0000e6;font-weight:bold;">Log</div>
<div class="t" style="left:337.00px;top:222.00px;font-size:10px;line-height:10px;color:#000;font-weight:bold;transform:scaleX(1.1188);transform-origin:0 0;">Validate Log</div>
<div class="t" style="left:526.10px;top:222.00px;font-size:10px;line-height:10px;color:#000;font-weight:bold;transform:scaleX(1.1538);transform-origin:0 0;">*Material Number</div>
<div class="t" style="left:531.70px;top:236.00px;font-size:10px;line-height:10px;color:#000;font-weight:bold;transform:scaleX(1.1028);transform-origin:0 0;">RMMG1-MATNR</div>
<div class="t" style="left:679.50px;top:222.00px;font-size:10px;line-height:10px;color:#000;font-weight:bold;transform:scaleX(1.1622);transform-origin:0 0;">*Industry sector</div>
<div class="t" style="left:681.75px;top:236.00px;font-size:10px;line-height:10px;color:#000;font-weight:bold;transform:scaleX(1.0848);transform-origin:0 0;">RMMG1-MBRSH</div>
<div class="t" style="left:827.50px;top:222.00px;font-size:10px;line-height:10px;color:#000;font-weight:bold;transform:scaleX(1.1559);transform-origin:0 0;">*Material Type</div>
<div class="t" style="left:825.50px;top:236.00px;font-size:10px;line-height:10px;color:#000;font-weight:bold;transform:scaleX(1.0963);transform-origin:0 0;">RMMG1-MTART</div>
<div class="t" style="left:980.00px;top:222.00px;font-size:10px;line-height:10px;color:#000;font-weight:bold;transform:scaleX(1.1447);transform-origin:0 0;">Material Description (Short Text)</div>
<div class="t" style="left:1032.30px;top:236.00px;font-size:10px;line-height:10px;color:#000;font-weight:bold;transform:scaleX(1.0818);transform-origin:0 0;">MAKT-MAKTX</div>
<div class="t" style="left:501.10px;top:251.00px;font-size:12px;line-height:12px;color:#000;">PID-608-SW550</div>
<div class="t" style="left:651.70px;top:251.00px;font-size:12px;line-height:12px;color:#000;transform:scaleX(0.7820);transform-origin:0 0;">1</div>
<svg style="position:absolute;left:648.9px;top:247.5px;overflow:visible" width="5" height="5" viewBox="0 0 5 5"><path d="M0 0 H5 L0 5 Z" fill="#1e7e34"/></svg>
<div class="t" style="left:801.50px;top:251.00px;font-size:12px;line-height:12px;color:#000;transform:scaleX(0.8392);transform-origin:0 0;">FERT</div>
<div class="t" style="left:937.30px;top:251.00px;font-size:12px;line-height:12px;color:#000;transform:scaleX(1.0942);transform-origin:0 0;">Demo Material</div>
<div class="t" style="left:501.10px;top:269.00px;font-size:12px;line-height:12px;color:#000;">PID-608-SW551</div>
<div class="t" style="left:651.70px;top:269.00px;font-size:12px;line-height:12px;color:#000;transform:scaleX(0.7820);transform-origin:0 0;">1</div>
<svg style="position:absolute;left:648.9px;top:265.65px;overflow:visible" width="5" height="5" viewBox="0 0 5 5"><path d="M0 0 H5 L0 5 Z" fill="#1e7e34"/></svg>
<div class="t" style="left:801.50px;top:269.00px;font-size:12px;line-height:12px;color:#000;transform:scaleX(0.8392);transform-origin:0 0;">FERT</div>
<div class="t" style="left:937.30px;top:269.00px;font-size:12px;line-height:12px;color:#000;transform:scaleX(1.0942);transform-origin:0 0;">Demo Material</div>
<div class="t" style="left:501.10px;top:287.00px;font-size:12px;line-height:12px;color:#000;">PID-608-SW552</div>
<div class="t" style="left:651.70px;top:287.00px;font-size:12px;line-height:12px;color:#000;transform:scaleX(0.7820);transform-origin:0 0;">1</div>
<svg style="position:absolute;left:648.9px;top:283.8px;overflow:visible" width="5" height="5" viewBox="0 0 5 5"><path d="M0 0 H5 L0 5 Z" fill="#1e7e34"/></svg>
<div class="t" style="left:801.50px;top:287.00px;font-size:12px;line-height:12px;color:#000;transform:scaleX(0.8392);transform-origin:0 0;">FERT</div>
<div class="t" style="left:937.30px;top:287.00px;font-size:12px;line-height:12px;color:#000;transform:scaleX(1.0942);transform-origin:0 0;">Demo Material</div>
<div style="position:absolute;left:241.3px;top:337.25px;width:258px;height:19.349999999999998px;box-sizing:border-box;border:1.8px solid #1e7145;"></div>
<div style="position:absolute;left:496.1px;top:353.9px;width:4px;height:4px;background:#1e7145;box-shadow:0 0 0 1px #fff;"></div>
<div style="position:absolute;left:1182.4px;top:201.6px;width:15.6px;height:386px;background:#f7f7f7;border-radius:8px;"></div>
<div style="position:absolute;left:1198.5px;top:45px;width:1.5px;height:592px;background:#f7f7f7;"></div>
<svg style="position:absolute;left:1186.5px;top:207px;overflow:visible" width="8.4" height="6" viewBox="0 0 8.4 6"><path d="M4.2 0 L8.4 6 H0 Z" fill="#6e6e6e" stroke="#6e6e6e" stroke-width="0.8" stroke-linejoin="round"/></svg>
<div style="position:absolute;left:1187px;top:218px;width:7.2px;height:331.6px;background:#6e6e6e;border-radius:4px;"></div>
<svg style="position:absolute;left:1186.5px;top:578px;overflow:visible" width="8.4" height="6" viewBox="0 0 8.4 6"><path d="M0 0 H8.4 L4.2 6 Z" fill="#6e6e6e" stroke="#6e6e6e" stroke-width="0.8" stroke-linejoin="round"/></svg>
<div style="position:absolute;left:96px;top:587px;width:70px;height:8px;background:#fff;"></div>
<div style="position:absolute;left:0px;top:587px;width:104px;height:30px;background:#f0f0f0;border-top-right-radius:5px;"></div>
<div style="position:absolute;left:158px;top:587px;width:1040.5px;height:30px;background:#f0f0f0;border-top-left-radius:5px;"></div>
<div style="position:absolute;left:104px;top:595px;width:54px;height:22px;background:#f0f0f0;"></div>
<svg style="position:absolute;left:22px;top:597px;overflow:visible" width="6" height="8" viewBox="0 0 6 8"><path d="M5.4 0.5 L1 4 L5.4 7.5" fill="none" stroke="#9a9a9a" stroke-width="1.1"/></svg>
<svg style="position:absolute;left:52.4px;top:597px;overflow:visible" width="6" height="8" viewBox="0 0 6 8"><path d="M0.6 0.5 L5 4 L0.6 7.5" fill="none" stroke="#9a9a9a" stroke-width="1.1"/></svg>
<div style="position:absolute;left:104px;top:587px;width:54px;height:26px;background:#fff;border-radius:0 0 5px 5px;box-shadow:0 1px 1px -0.5px rgba(0,0,0,0.2);"></div>
<div class="t" style="left:111.60px;top:594.00px;font-size:12.3px;line-height:12.3px;color:#242424;transform:scaleX(0.9744);transform-origin:0 0;-webkit-text-stroke:0.5px #242424;">Sheet1</div>
<div style="position:absolute;left:111.4px;top:608.8px;width:38.6px;height:1.9px;background:#107c41;border-radius:1px;"></div>
<div style="position:absolute;left:161.2px;top:593.6px;width:1px;height:16.4px;background:#cfcfcf;"></div>
<svg style="position:absolute;left:200.6px;top:596px;overflow:visible" width="11" height="10.5" viewBox="0 0 11 10.5"><g stroke="#424242" stroke-width="1.2"><line x1="5.5" y1="0" x2="5.5" y2="10.5"/><line x1="0" y1="5.25" x2="11" y2="5.25"/></g></svg>
<div style="position:absolute;left:722px;top:597.6px;width:2.2px;height:2.2px;background:#242424;border-radius:50%;"></div>
<div style="position:absolute;left:722px;top:601.2px;width:2.2px;height:2.2px;background:#242424;border-radius:50%;"></div>
<div style="position:absolute;left:722px;top:604.8px;width:2.2px;height:2.2px;background:#242424;border-radius:50%;"></div>
<div style="position:absolute;left:738px;top:593.3px;width:443px;height:16px;background:#f7f7f7;border-radius:8px;"></div>
<svg style="position:absolute;left:743px;top:597.5px;overflow:visible" width="6.5" height="7.5" viewBox="0 0 6.5 7.5"><path d="M0 3.75 L6.5 0 V7.5 Z" fill="#6e6e6e"/></svg>
<div style="position:absolute;left:754.2px;top:597.2px;width:105.8px;height:7.5px;background:#6e6e6e;border-radius:4px;"></div>
<svg style="position:absolute;left:1171px;top:597.4px;overflow:visible" width="7" height="8.2" viewBox="0 0 7 8.2"><path d="M7 4.1 L0 0 V8.2 Z" fill="#6e6e6e"/></svg>
<div style="position:absolute;left:0px;top:616.5px;width:1200px;height:1px;background:#dcdcdc;"></div>
<div style="position:absolute;left:0px;top:617.5px;width:1200px;height:20px;background:#f3f3f3;"></div>
<div class="t" style="left:11.00px;top:622.00px;font-size:10.5px;line-height:10.5px;color:#424242;transform:scaleX(0.8699);transform-origin:0 0;-webkit-text-stroke:0.2px #424242;">Ready</div>
<svg style="position:absolute;left:54px;top:620.5px;overflow:visible" width="15" height="14" viewBox="0 0 15 14"><g fill="none" stroke="#3a3a3a" stroke-width="1.05" stroke-linecap="round" stroke-linejoin="round"><circle cx="6.3" cy="2.3" r="1.5"/><path d="M1.6 2.6 Q0.6 3.4 1.4 4.8 Q2.6 6 4.2 6.2 Q4.8 8.4 4 10 Q3.2 11.6 3.6 12.4 Q4.3 13 5 12 Q5.8 10.6 6.8 9.6"/><path d="M11 2.6 Q12 3.4 11.2 4.8 Q10 6 8.4 6.2 Q8.3 7.5 8 8.2"/><path d="M7.6 11 L9.6 13 L14.2 8"/></g></svg>
<div class="t" style="left:71.40px;top:622.00px;font-size:10.5px;line-height:10.5px;color:#424242;transform:scaleX(0.9187);transform-origin:0 0;-webkit-text-stroke:0.2px #424242;">Accessibility: Good to go</div>
<div style="position:absolute;left:922.5px;top:617.5px;width:36.8px;height:20px;background:#e3e3e3;"></div>
<svg style="position:absolute;left:934px;top:621.3px;overflow:visible" width="12" height="11.2" viewBox="0 0 12 11.2"><g fill="none" stroke="#333" stroke-width="1"><rect x="0.5" y="0.5" width="11" height="10.2"/><line x1="4.2" y1="0.5" x2="4.2" y2="10.7"/><line x1="7.8" y1="0.5" x2="7.8" y2="10.7"/><line x1="0.5" y1="3.9" x2="11.5" y2="3.9"/><line x1="0.5" y1="7.3" x2="11.5" y2="7.3"/></g></svg>
<svg style="position:absolute;left:971px;top:621.3px;overflow:visible" width="14" height="11.2" viewBox="0 0 14 11.2"><g fill="none" stroke="#333" stroke-width="1"><rect x="0.5" y="0.5" width="13" height="10.2"/><rect x="3" y="2.3" width="8" height="6.6"/></g><g stroke="#777" stroke-width="0.8"><line x1="4.5" y1="4" x2="9.5" y2="4"/><line x1="4.5" y1="5.6" x2="9.5" y2="5.6"/><line x1="4.5" y1="7.2" x2="9.5" y2="7.2"/></g></svg>
<svg style="position:absolute;left:1009px;top:621.3px;overflow:visible" width="13.5" height="11.2" viewBox="0 0 13.5 11.2"><g fill="none" stroke="#333" stroke-width="1"><path d="M0.5 0.5 H13 V10.7 H0.5 Z"/><path d="M5 0.5 V6 H9 V0.5"/></g></svg>
<div style="position:absolute;left:1038.8px;top:626.5px;width:7.2px;height:1px;background:#555;"></div>
<div style="position:absolute;left:1051.8px;top:626.5px;width:92px;height:1px;background:#555;"></div>
<div style="position:absolute;left:1095.8px;top:622px;width:4.7px;height:10px;background:#555;"></div>
<svg style="position:absolute;left:1149px;top:622.5px;overflow:visible" width="8" height="8" viewBox="0 0 8 8"><g stroke="#555" stroke-width="1"><line x1="4" y1="0" x2="4" y2="8"/><line x1="0" y1="4" x2="8" y2="4"/></g></svg>
<div class="t" style="left:1168.80px;top:622.00px;font-size:10.5px;line-height:10.5px;color:#424242;transform:scaleX(0.8827);transform-origin:0 0;-webkit-text-stroke:0.2px #424242;">100%</div>
<div style="position:absolute;left:0px;top:637px;width:45px;height:1px;background:#5a5a5a;"></div>
<div style="position:absolute;left:45px;top:637px;width:270px;height:1px;background:#d0d0d0;"></div>
<div style="position:absolute;left:315px;top:637px;width:885px;height:1px;background:#5a5a5a;"></div>
<svg width="0" height="0" style="position:absolute"><defs>
<linearGradient id="gBody" x1="0" y1="0" x2="0" y2="1"><stop offset="0" stop-color="#7fb2e6"/><stop offset="0.55" stop-color="#3d86d6"/><stop offset="1" stop-color="#1f4fb8"/></linearGradient>
<linearGradient id="gHair" x1="0" y1="0" x2="0" y2="1"><stop offset="0" stop-color="#a0521e"/><stop offset="1" stop-color="#6a2e10"/></linearGradient>
<linearGradient id="gFace" x1="0" y1="0" x2="1" y2="1"><stop offset="0" stop-color="#f6deb0"/><stop offset="1" stop-color="#d9c27a"/></linearGradient>
<linearGradient id="gShield" x1="0" y1="0" x2="0" y2="1"><stop offset="0" stop-color="#5fd35f"/><stop offset="1" stop-color="#128a2a"/></linearGradient>
<linearGradient id="gGreenP" x1="0" y1="0" x2="0" y2="1"><stop offset="0" stop-color="#57c94a"/><stop offset="1" stop-color="#0f8a12"/></linearGradient>
<linearGradient id="gInfo" x1="0" y1="0" x2="1" y2="1"><stop offset="0" stop-color="#5a95d8"/><stop offset="0.6" stop-color="#4a5fc4"/><stop offset="1" stop-color="#2b3fa0"/></linearGradient>
<linearGradient id="gPlay" x1="0" y1="0" x2="0" y2="1"><stop offset="0" stop-color="#fdf8a0"/><stop offset="0.6" stop-color="#f9e07a"/><stop offset="1" stop-color="#f5b88a"/></linearGradient>
<linearGradient id="gPaper" x1="0" y1="0" x2="0" y2="1"><stop offset="0" stop-color="#ffffff"/><stop offset="0.6" stop-color="#eeeeee"/><stop offset="1" stop-color="#d8ecf8"/></linearGradient>
<linearGradient id="gBolt" x1="0" y1="0" x2="0" y2="1"><stop offset="0" stop-color="#fff27a"/><stop offset="1" stop-color="#f5c02a"/></linearGradient>
<linearGradient id="gFlask" x1="0" y1="0" x2="0" y2="1"><stop offset="0" stop-color="#c8d8ea"/><stop offset="1" stop-color="#2d6fb5"/></linearGradient>
</defs></svg>
<svg style="position:absolute;left:29.6px;top:79px;overflow:visible" width="30" height="31" viewBox="0 0 30 31"><path d="M1.2 26.5 Q0.8 16.5 8 14.2 L11.9 14 L16 14.2 Q20.5 15.5 21 20 L21 28.2 Q11 29 2 28.2 Z" fill="url(#gBody)"/><path d="M7.2 14.3 L11.9 19.8 L16.6 14.3 Z" fill="#fff"/><path d="M6.6 9.4 Q6 0.2 12.2 0.1 Q18.4 0.2 17.9 9.4 Z" fill="url(#gHair)"/><ellipse cx="11.9" cy="10.6" rx="4.3" ry="5.2" fill="url(#gFace)"/><path d="M7.4 7.5 Q8 3.8 12.2 3.9 Q15 4 16.6 6.5 Q14 5.2 12 5.6 Q9 5.6 7.4 7.5 Z" fill="url(#gHair)"/><path d="M15.3 16 Q22 13.6 29.2 15.6 Q30.2 25.5 22.3 30.3 Q14.4 25.5 15.3 16 Z" fill="url(#gShield)" stroke="#1c8a30" stroke-width="0.6"/><path d="M18.8 22.2 L21.6 25 L26.2 19.6" fill="none" stroke="#fff" stroke-width="2" stroke-linecap="round" stroke-linejoin="round"/></svg>
<svg style="position:absolute;left:91.6px;top:79px;overflow:visible" width="30" height="31" viewBox="0 0 30 31"><path d="M1.2 26.5 Q0.8 16.5 8 14.2 L11.9 14 L16 14.2 Q20.5 15.5 21 20 L21 28.2 Q11 29 2 28.2 Z" fill="url(#gBody)"/><path d="M7.2 14.3 L11.9 19.8 L16.6 14.3 Z" fill="#fff"/><path d="M6.6 9.4 Q6 0.2 12.2 0.1 Q18.4 0.2 17.9 9.4 Z" fill="url(#gHair)"/><ellipse cx="11.9" cy="10.6" rx="4.3" ry="5.2" fill="url(#gFace)"/><path d="M7.4 7.5 Q8 3.8 12.2 3.9 Q15 4 16.6 6.5 Q14 5.2 12 5.6 Q9 5.6 7.4 7.5 Z" fill="url(#gHair)"/><path d="M15.3 16 Q22 13.6 29.2 15.6 Q30.2 25.5 22.3 30.3 Q14.4 25.5 15.3 16 Z" fill="url(#gShield)" stroke="#1c8a30" stroke-width="0.6"/><path d="M18.8 22.2 L21.6 25 L26.2 19.6" fill="none" stroke="#fff" stroke-width="2" stroke-linecap="round" stroke-linejoin="round"/></svg>
<svg style="position:absolute;left:144.5px;top:80px;overflow:visible" width="16" height="16" viewBox="0 0 16 16"><path d="M3.5 0.6 H12.5 L15.4 3.5 V15.4 H3.5 Z" fill="#f4f7fb" stroke="#8a84c8" stroke-width="0.9"/><g stroke="#b8c8e0" stroke-width="0.7"><line x1="11" y1="5" x2="14" y2="5"/><line x1="11" y1="7" x2="14" y2="7"/><line x1="11" y1="9" x2="14" y2="9"/><line x1="11" y1="11" x2="14" y2="11"/></g><path d="M0.4 6 H3.8 V11 H6 V5 H10 V13.8 H0.4 Z" fill="#1b5fc8"/><path d="M0.4 6 H3.8 V13.8 H0.4 Z" fill="#2a7ae0"/></svg>
<svg style="position:absolute;left:145.8px;top:104.8px;overflow:visible" width="16" height="16" viewBox="0 0 16 16"><path d="M3.5 0.6 H12.5 L15.4 3.5 V15 H3.5 Z" fill="#f4f7fb" stroke="#8a84c8" stroke-width="0.9"/><g stroke="#b8c8e0" stroke-width="0.7"><line x1="11" y1="6" x2="14" y2="6"/><line x1="11" y1="8" x2="14" y2="8"/><line x1="11" y1="10" x2="14" y2="10"/></g><rect x="0.5" y="2.2" width="10" height="9.6" fill="#d9f0d0" stroke="#3a9a3a" stroke-width="1"/><path d="M3 4.5 L8 9.8 M8 4.5 L3 9.8" stroke="#1f7a2a" stroke-width="1.6"/></svg>
<svg style="position:absolute;left:146.2px;top:129px;overflow:visible" width="15" height="15" viewBox="0 0 15 15"><circle cx="7.5" cy="7.5" r="7.2" fill="url(#gInfo)" stroke="#2a3a90" stroke-width="0.5"/><circle cx="7.5" cy="3.6" r="1.3" fill="#fff"/><path d="M5.6 6 H8.6 V11 H9.6 V12.2 H5.4 V11 H6.4 V7.2 H5.6 Z" fill="#fff"/></svg>
<svg style="position:absolute;left:280.4px;top:80.4px;overflow:visible" width="16" height="15" viewBox="0 0 16 15"><rect x="0.5" y="0.5" width="15" height="14" fill="#f8fafc" stroke="#8aa0d0" stroke-width="0.9"/><rect x="0.5" y="0.5" width="15" height="1.8" fill="#5a8ae0"/><rect x="0.9" y="2.3" width="14.2" height="3.4" fill="#f5c400"/><rect x="0.9" y="4.6" width="14.2" height="1.1" fill="#e88a10"/><g stroke="#c8ccd8" stroke-width="0.6"><line x1="1" y1="8" x2="15" y2="8"/><line x1="1" y1="10.5" x2="15" y2="10.5"/><line x1="1" y1="13" x2="15" y2="13"/><line x1="5.5" y1="5.7" x2="5.5" y2="14.5"/><line x1="10.5" y1="5.7" x2="10.5" y2="14.5"/></g><path d="M8.2 11 L11 7.2 L13.8 11 H12.2 V13 Q12.5 14.4 14.5 15 Q10.6 15.4 10 12.8 V11 Z" fill="#2a5fb0" stroke="#1a3a80" stroke-width="0.5"/></svg>
<svg style="position:absolute;left:280.4px;top:104.8px;overflow:visible" width="16" height="15" viewBox="0 0 16 15"><rect x="0.5" y="0.5" width="15" height="14" fill="#eaf2fc" stroke="#7a90d8" stroke-width="0.9"/><rect x="0.5" y="0.5" width="15" height="1.8" fill="#5a8ae0"/><g stroke="#b8c8e8" stroke-width="0.6"><line x1="1" y1="5" x2="15" y2="5"/><line x1="1" y1="8" x2="15" y2="8"/><line x1="1" y1="11" x2="15" y2="11"/></g><circle cx="7.6" cy="7.6" r="4.3" fill="#fff" stroke="#8a8a8a" stroke-width="1.1"/><path d="M10.8 10.8 L14.2 14.2" stroke="#d07a10" stroke-width="2.4" stroke-linecap="round"/></svg>
<svg style="position:absolute;left:398.2px;top:80.4px;overflow:visible" width="15" height="15" viewBox="0 0 15 15"><rect x="0.5" y="0.5" width="13.5" height="13" fill="#fafcff" stroke="#8aa0d8" stroke-width="0.9"/><rect x="0.5" y="0.5" width="13.5" height="1.7" fill="#5a8ae0"/><path d="M2 3.6 L5 6.4 M5 3.6 L2 6.4" stroke="#e03a3a" stroke-width="1"/><path d="M1.8 9.6 L3.4 11.2 L6.2 7.8" fill="none" stroke="#2aa02a" stroke-width="1.1"/><g stroke="#b0b8c8" stroke-width="0.6"><line x1="7" y1="4.5" x2="12.5" y2="4.5"/></g><circle cx="10.8" cy="10.8" r="3.6" fill="#f2e050" stroke="#b09a20" stroke-width="0.7"/><circle cx="10.8" cy="10.8" r="1.6" fill="#3a3a3a"/></svg>
<svg style="position:absolute;left:398.2px;top:105px;overflow:visible" width="14.5" height="13.5" viewBox="0 0 14.5 13.5"><rect x="0.5" y="0.5" width="13.3" height="12.3" fill="#fafcff" stroke="#8a94b8" stroke-width="0.9"/><rect x="0.5" y="0.5" width="13.3" height="1.9" fill="#5a8ae0"/><path d="M3 7.4 L5.8 10.2 L11.2 4.6" fill="none" stroke="#20a020" stroke-width="1.9" stroke-linejoin="round"/></svg>
<svg style="position:absolute;left:398.2px;top:129px;overflow:visible" width="15" height="15" viewBox="0 0 15 15"><path d="M4.6 0.6 H8.4 M5.3 0.8 V5.5 L0.8 13.6 Q0.6 14.4 1.6 14.4 H9 M7.7 0.8 V5.5 L10.5 10.5" fill="none" stroke="#8a96a8" stroke-width="0.9"/><path d="M4 7.5 H9 L11.2 11.5 L10 14.2 H1.4 Z" fill="url(#gFlask)"/><path d="M8.2 11.6 L10.4 13.8 L14.4 9.4" fill="none" stroke="#18a018" stroke-width="1.8" stroke-linejoin="round"/></svg>
<svg style="position:absolute;left:488px;top:79px;overflow:visible" width="32" height="31" viewBox="0 0 32 31"><defs><linearGradient id="gPap2" x1="0" y1="0" x2="0" y2="1"><stop offset="0" stop-color="#ffffff"/><stop offset="0.45" stop-color="#f6f6f6"/><stop offset="0.7" stop-color="#eeeeee"/><stop offset="0.86" stop-color="#d8effc"/><stop offset="1" stop-color="#eef6fc"/></linearGradient><linearGradient id="gRoll" x1="0" y1="0" x2="0" y2="1"><stop offset="0" stop-color="#ffffff"/><stop offset="0.6" stop-color="#f2f6fa"/><stop offset="1" stop-color="#c8dcf0"/></linearGradient></defs><path d="M15.6 6.5 H28.9 Q30.6 6.8 30.5 9.2 Q30.2 11.8 27.8 12.2 L22.5 28.4 H6.5 L7.9 15.6 Z" fill="url(#gPap2)" stroke="#a6aab6" stroke-width="0.8"/><path d="M26.3 9.4 Q26.6 6.5 28.9 6.5 Q30.6 6.8 30.5 9.2 Q30.2 12.2 27.6 12.4 Q26.2 11.6 26.3 9.4 Z" fill="#dfe8f6" stroke="#8a92b8" stroke-width="0.8"/><rect x="2.5" y="24.1" width="20.2" height="5.4" rx="2.7" fill="url(#gRoll)" stroke="#8c92a6" stroke-width="0.9"/><path d="M21.2 24.3 Q23.2 26.5 21.4 29.4" fill="none" stroke="#8890b8" stroke-width="0.7"/></svg>
<svg style="position:absolute;left:488.6px;top:79.1px;overflow:visible" width="15" height="15" viewBox="0 0 15 15"><defs><linearGradient id="gPlay2" x1="0" y1="0" x2="0" y2="1"><stop offset="0" stop-color="#fdf9a8"/><stop offset="0.5" stop-color="#faf088"/><stop offset="0.52" stop-color="#f9cfa0"/><stop offset="1" stop-color="#f9d090"/></linearGradient></defs><circle cx="7.5" cy="7.5" r="7.1" fill="url(#gPlay2)" stroke="#f0c890" stroke-width="0.8"/><path d="M5.5 4 L10.3 7.5 L5.5 11 Z" fill="#5a2a08"/></svg>
<svg style="position:absolute;left:528px;top:79px;overflow:visible" width="32" height="31" viewBox="0 0 32 31"><defs><linearGradient id="gPap2" x1="0" y1="0" x2="0" y2="1"><stop offset="0" stop-color="#ffffff"/><stop offset="0.45" stop-color="#f6f6f6"/><stop offset="0.7" stop-color="#eeeeee"/><stop offset="0.86" stop-color="#d8effc"/><stop offset="1" stop-color="#eef6fc"/></linearGradient><linearGradient id="gRoll" x1="0" y1="0" x2="0" y2="1"><stop offset="0" stop-color="#ffffff"/><stop offset="0.6" stop-color="#f2f6fa"/><stop offset="1" stop-color="#c8dcf0"/></linearGradient></defs><path d="M15.6 6.5 H28.9 Q30.6 6.8 30.5 9.2 Q30.2 11.8 27.8 12.2 L22.5 28.4 H6.5 L7.9 15.6 Z" fill="url(#gPap2)" stroke="#a6aab6" stroke-width="0.8"/><path d="M26.3 9.4 Q26.6 6.5 28.9 6.5 Q30.6 6.8 30.5 9.2 Q30.2 12.2 27.6 12.4 Q26.2 11.6 26.3 9.4 Z" fill="#dfe8f6" stroke="#8a92b8" stroke-width="0.8"/><rect x="2.5" y="24.1" width="20.2" height="5.4" rx="2.7" fill="url(#gRoll)" stroke="#8c92a6" stroke-width="0.9"/><path d="M21.2 24.3 Q23.2 26.5 21.4 29.4" fill="none" stroke="#8890b8" stroke-width="0.7"/></svg>
<svg style="position:absolute;left:531.5px;top:79.8px;overflow:visible" width="13" height="16" viewBox="0 0 13 16"><path d="M3.3 0.7 L9.9 0.7 L7 5.2 L12.6 5.2 L1.2 15 L4.6 7.8 L0.6 7.3 Z" fill="url(#gBolt)" stroke="#d88a20" stroke-width="0.8" stroke-linejoin="round"/></svg>
<svg style="position:absolute;left:569.2px;top:80.3px;overflow:visible" width="16" height="16" viewBox="0 0 16 16"><rect x="0.5" y="2" width="14.4" height="13.1" fill="#fff" stroke="#4a9ad8" stroke-width="0.9"/><rect x="0.5" y="1.6" width="14.4" height="3.2" fill="#f39a1e"/><circle cx="1.80" cy="1.6" r="1.1" fill="#f5a030" stroke="#d07010" stroke-width="0.4"/><circle cx="4.16" cy="1.6" r="1.1" fill="#f5a030" stroke="#d07010" stroke-width="0.4"/><circle cx="6.52" cy="1.6" r="1.1" fill="#f5a030" stroke="#d07010" stroke-width="0.4"/><circle cx="8.88" cy="1.6" r="1.1" fill="#f5a030" stroke="#d07010" stroke-width="0.4"/><circle cx="11.24" cy="1.6" r="1.1" fill="#f5a030" stroke="#d07010" stroke-width="0.4"/><circle cx="13.60" cy="1.6" r="1.1" fill="#f5a030" stroke="#d07010" stroke-width="0.4"/><g stroke="#c8dff0" stroke-width="0.7"><line x1="1" y1="8" x2="14.5" y2="8"/><line x1="1" y1="11" x2="14.5" y2="11"/><line x1="5.3" y1="5" x2="5.3" y2="15"/><line x1="10" y1="5" x2="10" y2="15"/></g><rect x="10.3" y="5.5" width="4" height="2.3" fill="#f5c000"/><rect x="5.6" y="8.3" width="4.2" height="2.5" fill="#f5c000"/><rect x="10.3" y="8.3" width="4" height="2.5" fill="#f0b020"/></svg>
<svg style="position:absolute;left:1061px;top:79px;overflow:visible" width="31" height="30" viewBox="0 0 31 30"><rect x="0.5" y="0.5" width="19.5" height="18.3" fill="#fff" stroke="#a8a8a8" stroke-width="0.9"/><rect x="0.5" y="0.5" width="19.5" height="3.3" fill="#6aa8f0"/><rect x="13" y="0.5" width="7" height="3.3" fill="#8a8ae8"/><g stroke="#c8c8c8" stroke-width="1"><line x1="0.5" y1="7.8" x2="20" y2="7.8"/><line x1="0.5" y1="11.5" x2="20" y2="11.5"/><line x1="0.5" y1="15.2" x2="20" y2="15.2"/><line x1="4.4" y1="3.8" x2="4.4" y2="18.8"/><line x1="8.3" y1="3.8" x2="8.3" y2="18.8"/><line x1="12.2" y1="3.8" x2="12.2" y2="18.8"/><line x1="16.1" y1="3.8" x2="16.1" y2="18.8"/></g><path d="M12.5 29 Q11.5 20.5 18 18.5 H24 Q30.5 20.5 29.5 29 Z" fill="url(#gGreenP)" stroke="#0a6a0a" stroke-width="0.5"/><path d="M18 18.5 L21 21.8 L24 18.5 Z" fill="#fff"/><ellipse cx="21" cy="13.5" rx="5.4" ry="6" fill="#e8e8e8" stroke="#606060" stroke-width="0.6"/><path d="M15.6 13 Q15 7.2 21 7.5 Q26.5 7.2 26.5 11 Q24 8.8 19.5 10 Q17 10.8 16.2 15 Z" fill="#1a1a1a"/></svg>
<div style="position:absolute;left:565.4px;top:99.5px;width:136.1px;height:57px;box-sizing:border-box;background:#fff;border:1px solid #c8c8c8;box-shadow:2px 3px 4px rgba(0,0,0,0.22);"></div>
<div style="position:absolute;left:566.4px;top:126px;width:134.5px;height:29px;background:#efefef;border-top:1px solid #d8d8d8;"></div>
<div style="position:absolute;left:564.5px;top:124px;width:139.1px;height:32.7px;box-sizing:border-box;border:2.2px solid #e8383d;"></div>
<div class="t" style="left:601.30px;top:110.00px;font-size:11.5px;line-height:11.5px;color:#242424;transform:scaleX(0.9193);transform-origin:0 0;-webkit-text-stroke:0.2px #242424;">Schedule Local</div>
<div class="t" style="left:601.30px;top:137.00px;font-size:11.5px;line-height:11.5px;color:#242424;transform:scaleX(0.9165);transform-origin:0 0;-webkit-text-stroke:0.2px #242424;">Schedule Server</div>
<svg style="position:absolute;left:578.2px;top:105.8px;overflow:visible" width="16" height="16" viewBox="0 0 16 16"><rect x="0.5" y="2" width="14.2" height="12.9" fill="#fff" stroke="#4a9ad8" stroke-width="0.9"/><rect x="0.5" y="1.6" width="14.2" height="3.2" fill="#f39a1e"/><circle cx="1.80" cy="1.6" r="1.1" fill="#f5a030" stroke="#d07010" stroke-width="0.4"/><circle cx="4.12" cy="1.6" r="1.1" fill="#f5a030" stroke="#d07010" stroke-width="0.4"/><circle cx="6.44" cy="1.6" r="1.1" fill="#f5a030" stroke="#d07010" stroke-width="0.4"/><circle cx="8.76" cy="1.6" r="1.1" fill="#f5a030" stroke="#d07010" stroke-width="0.4"/><circle cx="11.08" cy="1.6" r="1.1" fill="#f5a030" stroke="#d07010" stroke-width="0.4"/><circle cx="13.40" cy="1.6" r="1.1" fill="#f5a030" stroke="#d07010" stroke-width="0.4"/><g fill="#4a9ad8"><rect x="1.4" y="5.6" width="3" height="2.4"/><rect x="5.4" y="5.6" width="3" height="2.4"/><rect x="9.4" y="5.6" width="3" height="2.4"/><rect x="1.4" y="9" width="3" height="2.4"/><rect x="1.4" y="12.2" width="3" height="2.4"/></g><rect x="6.2" y="8.8" width="9" height="5.4" fill="#a8b4f4" stroke="#4a9ab0" stroke-width="0.9"/><rect x="7.4" y="9.9" width="6.6" height="3.2" fill="#8a96ec"/><path d="M8.8 14.4 H12.6 L13.4 15.5 H8 Z" fill="#7ab0b0"/></svg>
<svg style="position:absolute;left:578.2px;top:134.2px;overflow:visible" width="16" height="15" viewBox="0 0 16 15"><rect x="0.5" y="2" width="14.2" height="12.1" fill="#fff" stroke="#4a9ad8" stroke-width="0.9"/><rect x="0.5" y="1.6" width="14.2" height="3.2" fill="#f39a1e"/><circle cx="1.80" cy="1.6" r="1.1" fill="#f5a030" stroke="#d07010" stroke-width="0.4"/><circle cx="4.70" cy="1.6" r="1.1" fill="#f5a030" stroke="#d07010" stroke-width="0.4"/><circle cx="7.60" cy="1.6" r="1.1" fill="#f5a030" stroke="#d07010" stroke-width="0.4"/><circle cx="10.50" cy="1.6" r="1.1" fill="#f5a030" stroke="#d07010" stroke-width="0.4"/><circle cx="13.40" cy="1.6" r="1.1" fill="#f5a030" stroke="#d07010" stroke-width="0.4"/><g fill="#4a9ad8"><rect x="1.4" y="5.4" width="2.8" height="2.4"/><rect x="5.2" y="5.4" width="2.8" height="2.4"/><rect x="1.4" y="8.8" width="2.8" height="2.4"/><rect x="5.2" y="8.8" width="2.8" height="2.4"/><rect x="1.4" y="12" width="2.8" height="2.2"/></g><rect x="8.8" y="4.2" width="6.4" height="10.8" rx="1" fill="#2a6a8a" stroke="#1a4a6a" stroke-width="0.6"/><rect x="9.8" y="5.8" width="4.4" height="6.8" fill="#8ad0e8"/><circle cx="12" cy="13.8" r="0.7" fill="#d0e060"/></svg>
<svg style="position:absolute;left:0;top:0;filter:drop-shadow(1.5px 2px 1.5px rgba(0,0,0,0.35))" width="1200" height="638"><line x1="486.3" y1="173.3" x2="563" y2="100.6" stroke="#fd3d42" stroke-width="7.6" stroke-linecap="round"/><path d="M577.3 87 L556.8 93.6 L569.5 107.3 Z" fill="#fd3d42" stroke="#fd3d42" stroke-width="1" stroke-linejoin="round"/></svg>
<div style="position:absolute;left:1px;top:45px;width:1px;height:592px;background:#f7f7f7;"></div>
</body></html>
